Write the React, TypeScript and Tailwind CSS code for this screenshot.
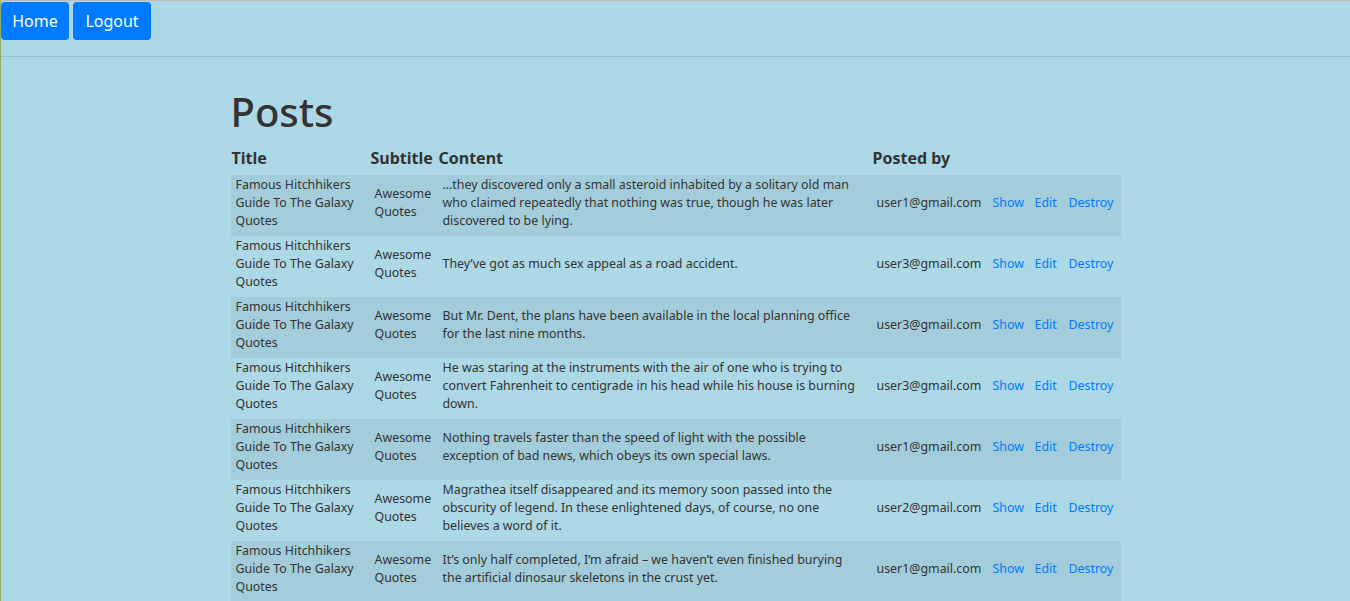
import React from "react";

type Post = { content: string; user: string };

const posts: Post[] = [
  {
    content:
      "…they discovered only a small asteroid inhabited by a solitary old man who claimed repeatedly that nothing was true, though he was later discovered to be lying.",
    user: "user1@gmail.com",
  },
  { content: "They’ve got as much sex appeal as a road accident.", user: "user3@gmail.com" },
  {
    content:
      "But Mr. Dent, the plans have been available in the local planning office for the last nine months.",
    user: "user3@gmail.com",
  },
  {
    content:
      "He was staring at the instruments with the air of one who is trying to convert Fahrenheit to centigrade in his head while his house is burning down.",
    user: "user3@gmail.com",
  },
  {
    content:
      "Nothing travels faster than the speed of light with the possible exception of bad news, which obeys its own special laws.",
    user: "user1@gmail.com",
  },
  {
    content:
      "Magrathea itself disappeared and its memory soon passed into the obscurity of legend. In these enlightened days, of course, no one believes a word of it.",
    user: "user2@gmail.com",
  },
  {
    content:
      "It’s only half completed, I’m afraid – we haven’t even finished burying the artificial dinosaur skeletons in the crust yet.",
    user: "user1@gmail.com",
  },
];

const App = () => {
  return (
    <div
      className="min-h-[601px] bg-[#add8e6] text-[#333] border-t border-t-[#bdbdbd] border-l border-l-[#8fae6a]"
      style={{ fontFamily: '"Noto Sans", sans-serif' }}
    >
      {/* nav */}
      <div className="flex gap-1 h-[56px] pt-px border-b border-[#97c3d2]">
        <button className="h-[38px] w-[68px] bg-[#007bff] text-white text-[16px] rounded-[4px]">Home</button>
        <button className="h-[38px] w-[78px] bg-[#007bff] text-white text-[16px] rounded-[4px]">Logout</button>
      </div>

      <div className="w-[890px] mx-auto pt-[28px]">
        <h1 className="text-[40px] leading-[54px] font-medium text-[#333] mb-[8px]">Posts</h1>
        <table className="w-[890px] border-collapse text-[12.4px] leading-[18px] table-fixed">
          <colgroup>
            <col className="w-[138px]" />
            <col className="w-[69px]" />
            <col className="w-[434px]" />
            <col className="w-[116px]" />
            <col className="w-[42px]" />
            <col className="w-[34px]" />
            <col className="w-[57px]" />
          </colgroup>
          <thead>
            <tr className="text-[16px] leading-[22px] font-bold text-left">
              <th className="px-px pb-[6px]">Title</th>
              <th className="px-[2px] pb-[6px]">Subtitle</th>
              <th className="px-px pb-[6px]">Content</th>
              <th className="px-px pb-[6px]" colSpan={4}>Posted by</th>
            </tr>
          </thead>
          <tbody>
            {posts.map((p, i) => (
              <tr key={i} className={`h-[61px] ${i % 2 === 0 ? "bg-[#a3cdda]" : ""}`}>
                <td className="px-[5px] pb-[6px] align-middle">Famous Hitchhikers Guide To The Galaxy Quotes</td>
                <td className="px-[6px] pb-[6px] align-middle">Awesome Quotes</td>
                <td className="pl-[5px] pr-[10px] pb-[6px] align-middle">{p.content}</td>
                <td className="px-[5px] pb-[6px] align-middle">{p.user}</td>
                <td className="px-[5px] pb-[6px] align-middle text-[#007bff]">Show</td>
                <td className="px-[5px] pb-[6px] align-middle text-[#007bff]">Edit</td>
                <td className="px-[5px] pb-[6px] align-middle text-[#007bff]">Destroy</td>
              </tr>
            ))}
          </tbody>
        </table>
      </div>
    </div>
  );
};

export default App;
